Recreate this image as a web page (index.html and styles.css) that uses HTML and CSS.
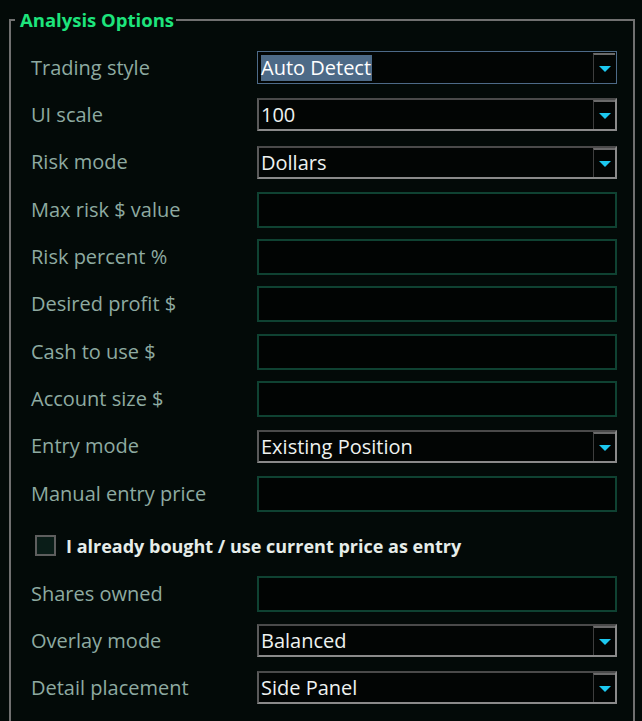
FILE: index.html
```html
<!DOCTYPE html>
<html>
<head>
<meta charset="utf-8">
<link rel="stylesheet" href="styles.css">
</head>
<body>
<fieldset class="group">
  <legend class="group-title">Analysis Options</legend>
  <div class="form">
    <div class="label">Trading style</div>
    <div class="combo combo-focus"><span class="combo-text"><span class="sel">Auto Detect</span></span><span class="combo-btn"><span class="arrow"></span></span></div>

    <div class="label">UI scale</div>
    <div class="combo"><span class="combo-text">100</span><span class="combo-btn"><span class="arrow"></span></span></div>

    <div class="label">Risk mode</div>
    <div class="combo"><span class="combo-text">Dollars</span><span class="combo-btn"><span class="arrow"></span></span></div>

    <div class="label">Max risk $ value</div>
    <div class="entry"></div>

    <div class="label">Risk percent %</div>
    <div class="entry"></div>

    <div class="label">Desired profit $</div>
    <div class="entry"></div>

    <div class="label">Cash to use $</div>
    <div class="entry"></div>

    <div class="label">Account size $</div>
    <div class="entry"></div>

    <div class="label">Entry mode</div>
    <div class="combo"><span class="combo-text">Existing Position</span><span class="combo-btn"><span class="arrow"></span></span></div>

    <div class="label">Manual entry price</div>
    <div class="entry"></div>

    <label class="check-row"><span class="checkbox"></span><span class="check-text">I already bought / use current price as entry</span></label>

    <div class="label">Shares owned</div>
    <div class="entry"></div>

    <div class="label">Overlay mode</div>
    <div class="combo"><span class="combo-text">Balanced</span><span class="combo-btn"><span class="arrow"></span></span></div>

    <div class="label">Detail placement</div>
    <div class="combo"><span class="combo-text">Side Panel</span><span class="combo-btn"><span class="arrow"></span></span></div>
  </div>
</fieldset>
</body>
</html>
```

FILE: styles.css
```css
html, body {
  margin: 0;
  padding: 0;
  background: #030a08;
  height: 100%;
  overflow: hidden;
}

body {
  font-family: "Open Sans", "Noto Sans", sans-serif;
}

.group {
  margin: 9px 0 0 9px;
  width: 626px;
  box-sizing: border-box;
  border: 2px solid #707070;
  padding: 13px 0 40px 20px;
  min-height: 760px;
}

.group-title {
  font-size: 18.5px;
  line-height: 22px;
  font-weight: 700;
  color: #1de47c;
  padding: 0 2px 0 5px;
  margin-left: -16px;
}

.form {
  display: grid;
  grid-template-columns: 226px 360px;
  grid-template-rows: repeat(10, 47.33px) 52.67px repeat(3, 47.2px);
  align-items: center;
}

.label {
  font-size: 20px;
  line-height: 26px;
  color: #8eaaa1;
  white-space: nowrap;
}

.combo {
  height: 33px;
  box-sizing: border-box;
  display: flex;
  border-style: solid;
  border-width: 2px;
  border-color: #4a4a4a #8a8a8a #8a8a8a #5a5a5a;
  background: #020504;
}

.combo-focus {
  border-width: 1px;
  border-color: #4d6a88;
  padding: 1px;
}

.combo-text {
  flex: 1;
  display: flex;
  align-items: center;
  padding-left: 2px;
  font-size: 20px;
  color: #eef2f0;
  white-space: nowrap;
}

.sel {
  background: #4d6a87;
  color: #ffffff;
  line-height: 26px;
  padding-right: 1px;
}

.combo-btn {
  width: 22px;
  display: flex;
  align-items: center;
  justify-content: center;
  border-left: 1px solid #3e3e3e;
  border-top: 2px solid #6a6a6a;
  box-sizing: border-box;
}

.arrow {
  width: 0;
  height: 0;
  border-left: 6px solid transparent;
  border-right: 6px solid transparent;
  border-top: 6px solid #1cc8f0;
  margin-top: 1px;
}

.entry {
  height: 36px;
  box-sizing: border-box;
  border: 2px solid #0f4232;
  background: #010403;
}

.check-row {
  grid-column: 1 / span 2;
  display: flex;
  align-items: center;
  padding-left: 4px;
  margin-top: 4px;
}

.checkbox {
  width: 21px;
  height: 21px;
  box-sizing: border-box;
  border: 2px solid #5e5e5e;
  background: #0a1d18;
  margin-right: 10px;
}

.check-text {
  font-size: 18px;
  font-weight: 700;
  color: #e6ede9;
  white-space: nowrap;
}
```
